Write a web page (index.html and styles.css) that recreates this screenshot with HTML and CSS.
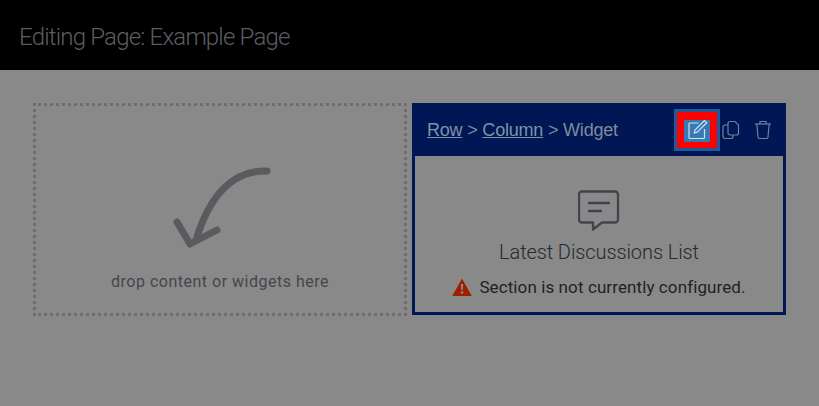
FILE: index.html
```html
<!DOCTYPE html>
<html lang="en">
<head>
    <meta charset="UTF-8">
    <title>Editing Page: Example Page</title>
    <link rel="stylesheet" href="styles.css">
</head>
<body>
    <header class="page-header">Editing Page: Example Page</header>

    <main class="columns">
        <div class="dropzone">
            <svg class="drop-arrow" width="100" height="84" viewBox="0 0 100 84" fill="none" stroke="#5a5b5f" stroke-width="7" stroke-linecap="round" stroke-linejoin="round">
                <path d="M95 5 C62 4 38 28 24 74"/>
                <path d="M5 56 L18 78 L45 64"/>
            </svg>
            <div class="drop-text">drop content or widgets here</div>
        </div>

        <div class="widget">
            <div class="widget-bar">
                <div class="crumbs"><a href="#">Row</a> &gt; <a href="#">Column</a> &gt; Widget</div>
                <div class="tools">
                    <button class="tool tool-edit" type="button">
                        <svg width="22" height="22" viewBox="-0.500 1.500 22 22" fill="none" stroke="#d5dfe9" stroke-width="1.2">
                            <path d="M12 4.500H3.500a1 1 0 0 0-1 1V19a1 1 0 0 0 1 1H17a1 1 0 0 0 1-1V10.500"/>
                            <path d="M8.500 11.500 18 2l2.200 2.200-9.500 9.500-3 .8z"/>
                        </svg>
                    </button>
                    <button class="tool" type="button">
                        <svg width="18" height="20" viewBox="0 0 18 20" fill="none" stroke="#6f8296" stroke-width="1.2">
                            <path d="M6 3.500a2 2 0 0 1 2-2h5l3.500 3.500v8a2 2 0 0 1-2 2H8a2 2 0 0 1-2-2z"/>
                            <path d="M6 5H3a2 2 0 0 0-2 2v9a2.500 2.500 0 0 0 2.500 2.500H9a2 2 0 0 0 2-2V15"/>
                        </svg>
                    </button>
                    <button class="tool" type="button">
                        <svg width="18" height="20" viewBox="0 0 18 20" fill="none" stroke="#6f8296" stroke-width="1.2">
                            <path d="M1 4h16"/>
                            <path d="M6 4V1.500h6V4"/>
                            <path d="M2.800 4 4 17a1.500 1.500 0 0 0 1.500 1.500h7A1.500 1.500 0 0 0 14 17l1.200-13"/>
                        </svg>
                    </button>
                </div>
            </div>
            <div class="widget-body">
                <svg class="widget-icon" width="42" height="42" viewBox="0 0 42 42" fill="none" stroke="#41444c" stroke-width="2.300" stroke-linejoin="round" stroke-linecap="round">
                    <path d="M4 1.500h33a3 3 0 0 1 3 3v25a3 3 0 0 1-3 3H24l-9 7v-7H4a3 3 0 0 1-3-3v-25a3 3 0 0 1 3-3z"/>
                    <path d="M11 13h20"/>
                    <path d="M11 21h12"/>
                </svg>
                <div class="widget-title">Latest Discussions List</div>
                <div class="widget-warning">
                    <svg width="20" height="18" viewBox="0 0 20 18">
                        <path d="M10 0.500 19.800 18H0.200z" fill="#9c2000"/>
                        <path d="M8.900 6h2.200l-.3 6H9.200z" fill="#8b8b8b"/>
                        <circle cx="10" cy="14.500" r="1.300" fill="#8b8b8b"/>
                    </svg>
                    <span>Section is not currently configured.</span>
                </div>
            </div>
        </div>
    </main>
</body>
</html>
```

FILE: styles.css
```css
* {
    margin: 0;
    padding: 0;
    box-sizing: border-box;
}

body {
    background-color: #898989;
    min-height: 100vh;
    font-family: 'Roboto', sans-serif;
    overflow: hidden;
}

.page-header {
    height: 70px;
    padding: 3px 19px 0;
    display: flex;
    align-items: center;
    background-color: #000;
    color: #5c5d62;
    font-size: 24px;
    font-weight: 300;
    letter-spacing: -0.8px;
}

.columns {
    display: flex;
    gap: 5px;
    padding: 33px 33px 0;
}

.dropzone {
    width: 374px;
    height: 213px;
    border: 3px dotted #6e6e6e;
    display: flex;
    flex-direction: column;
    align-items: center;
}

.drop-arrow {
    margin-top: 60px;
    margin-left: 4px;
}

.drop-text {
    margin-top: 22px;
    color: #45464b;
    font-size: 16px;
    letter-spacing: 0.5px;
}

.widget {
    width: 374px;
    height: 212px;
    border: 3px solid #001655;
    display: flex;
    flex-direction: column;
}

.widget-bar {
    height: 50px;
    flex-shrink: 0;
    padding: 0 5px 2px 12px;
    display: flex;
    align-items: center;
    justify-content: space-between;
    background-color: #001655;
    color: #7f8b98;
    font-family: 'Liberation Sans', sans-serif;
    font-size: 18px;
    letter-spacing: -0.2px;
}

.crumbs a {
    color: #7d93a6;
}

.tools {
    display: flex;
    align-items: center;
    gap: 1px;
}

.tool {
    width: 31px;
    height: 30px;
    display: flex;
    align-items: center;
    justify-content: center;
    background: none;
    border: none;
}

.tool-edit {
    width: 40px;
    height: 36px;
    margin-right: -3px;
    background-color: #337ab7;
    border-style: solid;
    border-color: #ff0000;
    border-width: 8px 7px 6px;
    outline: 3px solid #1c5a9a;
}

.widget-body {
    flex: 1;
    display: flex;
    flex-direction: column;
    align-items: center;
    padding-top: 34px;
    color: #2c2e34;
}

.widget-title {
    margin-top: 8px;
    font-size: 20px;
    font-weight: 300;
    letter-spacing: -0.1px;
    color: #26282e;
}

.widget-warning {
    margin-top: 13px;
    display: flex;
    align-items: center;
    gap: 7px;
    font-size: 17px;
    letter-spacing: 0.1px;
    color: #1f2127;
}
```
